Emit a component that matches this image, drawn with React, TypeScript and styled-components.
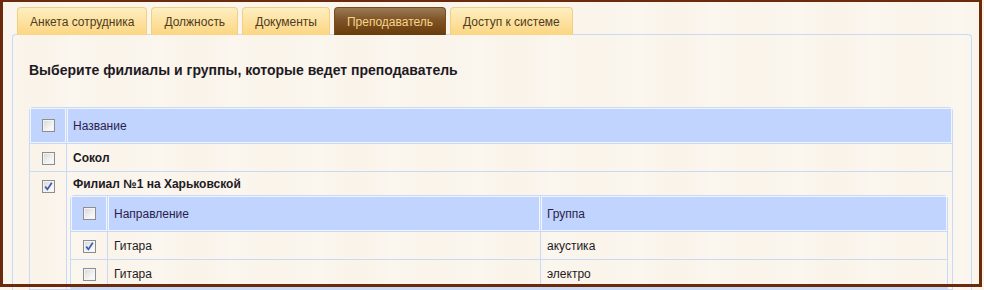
import React from "react";
import styled, { createGlobalStyle } from "styled-components";

const colors = {
  cream: "#fbf6ee",
  frame: "#6b2a0c",
  line: "#c8daf8",
  head: "#c0d4fd",
  text: "#1e1a24",
  tabText: "#4f3b22",
};

const GlobalStyle = createGlobalStyle`
  html, body {
    margin: 0;
    padding: 0;
    background: ${colors.cream};
    background-image: repeating-linear-gradient(90deg,
      rgba(240,228,208,0.0) 0px, rgba(240,228,208,0.18) 37px,
      rgba(240,228,208,0.0) 71px, rgba(240,228,208,0.12) 113px,
      rgba(240,228,208,0.0) 160px);
    font-family: "Liberation Sans", Arial, sans-serif;
    overflow: hidden;
  }
`;

const Page = styled.div`
  position: relative;
  width: 984px;
  height: 290px;
  overflow: hidden;
  padding: 7px 0 0 12px;
  box-sizing: border-box;
`;

// brown outline drawn over the whole shot
const Frame = styled.div`
  position: absolute;
  left: 0;
  top: -1px;
  width: 982px;
  height: 288px;
  box-sizing: border-box;
  border: 3px solid ${colors.frame};
  pointer-events: none;
  z-index: 5;
`;

const Tabs = styled.div`
  display: flex;
  gap: 4px;
  padding-left: 5px;
  position: relative;
  z-index: 2;
  margin-bottom: -1px;
`;

const Tab = styled.div<{ active?: boolean }>`
  height: 28px;
  box-sizing: border-box;
  padding: 0 12px;
  display: flex;
  align-items: center;
  font-size: 12px;
  border-radius: 4px 4px 0 0;
  border: 1px solid ${props => (props.active ? "#7a4a1a" : "#f2cf84")};
  border-bottom: none;
  color: ${props => (props.active ? "#f6d488" : colors.tabText)};
  background: ${props =>
    props.active
      ? "linear-gradient(to bottom, #9c7a55 0%, #7e5327 45%, #6a3b0a 100%)"
      : "linear-gradient(to bottom, #fdeec0 0%, #fde2a0 50%, #fbd683 100%)"};
`;

const Panel = styled.div`
  width: 960px;
  height: 300px;
  box-sizing: border-box;
  border: 1px solid ${colors.line};
  border-bottom: none;
  border-radius: 4px 4px 0 0;
  padding: 27px 18px 0 16px;
`;

const Heading = styled.p`
  margin: 0 0 28px 0;
  font-size: 14px;
  font-weight: bold;
  line-height: 17px;
  color: ${colors.text};
`;

const Table = styled.table<{ nested?: boolean }>`
  width: 100%;
  border-collapse: separate;
  border-spacing: 0;
  border: 1px solid ${colors.line};
  border-radius: 4px 4px 0 0;
  font-size: 12px;
  color: ${colors.text};
  margin-top: ${props => (props.nested ? 4 : 0)}px;
`;

const HeadCell = styled.th<{ check?: boolean; width?: number }>`
  background: ${colors.head};
  font-weight: normal;
  text-align: ${props => (props.check ? "center" : "left")};
  color: #2b1d4c;
  height: 36px;
  padding: ${props => (props.check ? "0" : "0 6px")};
  box-sizing: border-box;
  width: ${props => (props.width ? props.width + "px" : "auto")};
  border-right: 1px solid ${colors.line};
  border-bottom: 1px solid ${colors.line};
  box-shadow: inset 0 0 0 1px rgba(255, 255, 255, 0.75);
  &:last-child {
    border-right: none;
  }
`;

const Cell = styled.td<{ check?: boolean; bold?: boolean }>`
  vertical-align: top;
  text-align: ${props => (props.check ? "center" : "left")};
  font-weight: ${props => (props.bold ? "bold" : "normal")};
  padding: ${props => (props.check ? "8px 0 0 0" : "7px 6px 0 6px")};
  height: 28px;
  box-sizing: border-box;
  border-right: 1px solid ${colors.line};
  border-bottom: 1px solid ${colors.line};
  &:last-child {
    border-right: none;
  }
`;

const GroupCell = styled.td`
  vertical-align: top;
  padding: 5px 4px 0 3px;
  border-bottom: 1px solid ${colors.line};
`;

const GroupTitle = styled.div`
  font-weight: bold;
  padding-left: 3px;
  line-height: 14px;
`;

const Box = styled.span`
  display: inline-flex;
  align-items: center;
  justify-content: center;
  width: 13px;
  height: 13px;
  box-sizing: border-box;
  border: 1px solid #8d8d8d;
  background: linear-gradient(135deg, #d6d6d6 0%, #f2f2f2 60%, #ffffff 100%);
  box-shadow: inset 0 0 0 1px #f4f4f4;
  vertical-align: top;
`;

const Checkbox = ({ checked }: { checked?: boolean }) => (
  <Box>
    {checked && (
      <svg width="9" height="9" viewBox="0 0 9 9">
        <path d="M1.2 4.6 L3.4 7.4 L7.8 0.8" stroke="#3c57b4" strokeWidth="1.7" fill="none" />
      </svg>
    )}
  </Box>
);

const tabs = ["Анкета сотрудника", "Должность", "Документы", "Преподаватель", "Доступ к системе"];

export default function App() {
  return (
    <>
      <GlobalStyle />
      <Page>
        <Tabs>
          {tabs.map(t => (
            <Tab key={t} active={t === "Преподаватель"}>
              {t}
            </Tab>
          ))}
        </Tabs>
        <Panel>
          <Heading>Выберите филиалы и группы, которые ведет преподаватель</Heading>
          <Table>
            <thead>
              <tr>
                <HeadCell check width={37}>
                  <Checkbox />
                </HeadCell>
                <HeadCell>Название</HeadCell>
              </tr>
            </thead>
            <tbody>
              <tr>
                <Cell check>
                  <Checkbox />
                </Cell>
                <Cell bold>Сокол</Cell>
              </tr>
              <tr>
                <Cell check>
                  <Checkbox checked />
                </Cell>
                <GroupCell>
                  <GroupTitle>Филиал №1 на Харьковской</GroupTitle>
                  <Table nested>
                    <thead>
                      <tr>
                        <HeadCell check width={37}>
                          <Checkbox />
                        </HeadCell>
                        <HeadCell width={433}>Направление</HeadCell>
                        <HeadCell>Группа</HeadCell>
                      </tr>
                    </thead>
                    <tbody>
                      <tr>
                        <Cell check>
                          <Checkbox checked />
                        </Cell>
                        <Cell>Гитара</Cell>
                        <Cell>акустика</Cell>
                      </tr>
                      <tr>
                        <Cell check>
                          <Checkbox />
                        </Cell>
                        <Cell>Гитара</Cell>
                        <Cell>электро</Cell>
                      </tr>
                    </tbody>
                  </Table>
                </GroupCell>
              </tr>
            </tbody>
          </Table>
        </Panel>
        <Frame />
      </Page>
    </>
  );
}
